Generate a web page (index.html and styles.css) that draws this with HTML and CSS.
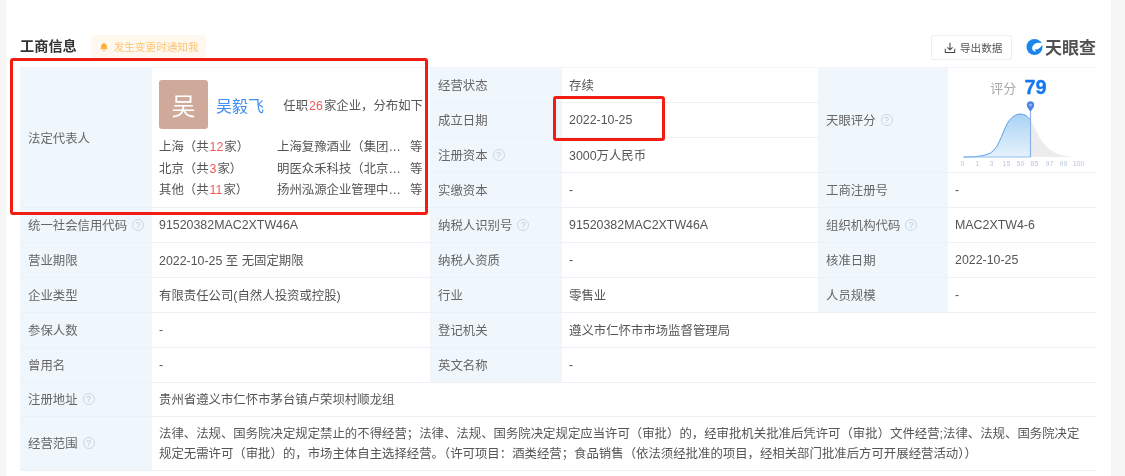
FILE: index.html
```html
<!DOCTYPE html>
<html lang="zh-CN">
<head>
<meta charset="utf-8">
<title>工商信息</title>
<link rel="stylesheet" href="styles.css">
</head>
<body>
<main class="card">
  <header class="head">
    <h2 class="title">工商信息</h2>
    <div class="notify">
      <svg class="bell" viewBox="0 0 12 12" width="10" height="10"><path d="M6 .8c.6 0 1 .4 1 .9 1.700.5 2.500 1.800 2.500 3.500v2.300l1 1.300H1.500l1-1.300V5.200C2.500 3.500 3.300 2.200 5 1.700c0-.5.400-.9 1-.9zM4.700 9.800h2.600C7.200 10.700 6.700 11.200 6 11.200s-1.200-.5-1.300-1.400z" fill="#ffb13d"/></svg>
      发生变更时通知我
    </div>
    <div class="spacer"></div>
    <button class="export">
      <svg viewBox="0 0 14 14" width="12" height="12" fill="none" stroke="#444" stroke-width="1.200"><path d="M7 1v8M4 6.200 7 9.200l3-3M1.500 8v4.200h11V8"/></svg>
      导出数据
    </button>
    <div class="logo">
      <svg viewBox="0 0 18 18" width="18" height="18"><circle cx="9" cy="9" r="8.500" fill="#1a86ec"/><path d="M18 5.500C13 3 7.500 5 6.500 9.500c-.4 2.500 1.500 4.500 4 4.200L9 11.500c2.500.5 5-.5 6.500-2.500.8-1 1.500-2 2.500-3.500z" fill="#fff"/></svg>
      <span>天眼查</span>
    </div>
  </header>

  <section class="grid">
    <div class="k span4">法定代表人</div>
    <div class="v person span4">
      <div class="person-top">
        <div class="avatar">吴</div>
        <a class="name">吴毅飞</a>
        <div class="summary">任职<em>26</em>家企业，分布如下</div>
      </div>
      <div class="dist"><span class="city">上海（共<em>12</em>家）</span><span class="co">上海复豫酒业（集团…</span><span>等</span></div>
      <div class="dist"><span class="city">北京（共<em>3</em>家）</span><span class="co">明医众禾科技（北京…</span><span>等</span></div>
      <div class="dist"><span class="city">其他（共<em>11</em>家）</span><span class="co">扬州泓源企业管理中…</span><span>等</span></div>
    </div>
    <div class="k">经营状态</div>
    <div class="v">存续</div>
    <div class="k span3">天眼评分<i class="q">?</i></div>
    <div class="v score span3">
      <div class="score-head"><span class="score-label">评分</span><b class="score-num">79</b></div>
      <svg class="chart" viewBox="0 0 136 70" width="136" height="70">
        <defs>
          <linearGradient id="fillBlue" x1="0" y1="0" x2="0" y2="1"><stop offset="0" stop-color="#a9d2f5"/><stop offset="1" stop-color="#e6f2fc"/></linearGradient>
        </defs>
        <path d="M76.500 19C81 26 84 36 89.500 42 95 49 102 53 109.500 54.500 115 55.500 120 56 124.500 56H76.500z" fill="#ececef"/>
        <path d="M9.500 56C22 56 30 55 36.500 52 46 47 50 24 56.500 18 60 14.500 63 13 66.500 13 71 13 74 16 76.500 19V56z" fill="url(#fillBlue)"/>
        <path d="M9.500 56C22 56 30 55 36.500 52 46 47 50 24 56.500 18 60 14.500 63 13 66.500 13 71 13 74 16 76.500 19" fill="none" stroke="#5a9fe8" stroke-width="1"/>
        <path d="M9.500 56h67" stroke="#8cc0f0" stroke-width="1"/>
        <path d="M76.500 8v48" stroke="#8ab2ea" stroke-width="1.200"/>
        <path d="M76.500 10.500c-2.500-3-3.700-4.800-3.700-6.500a3.700 3.700 0 0 1 7.400 0c0 1.700-1.200 3.500-3.700 6.500z" fill="#4d86e0"/>
        <circle cx="76.500" cy="4" r="1.300" fill="#9cc0f2"/>
        <g class="ticks"><text x="8.500" y="65">0</text><text x="23.500" y="65">1</text><text x="37.500" y="65">3</text><text x="52.500" y="65">15</text><text x="66.500" y="65">50</text><text x="80.500" y="65">85</text><text x="95.500" y="65">97</text><text x="109.500" y="65">99</text><text x="124.500" y="65">100</text></g>
      </svg>
    </div>
    <div class="k">成立日期</div>
    <div class="v">2022-10-25</div>
    <div class="k">注册资本<i class="q">?</i></div>
    <div class="v">3000万人民币</div>
    <div class="k">实缴资本</div>
    <div class="v">-</div>
    <div class="k">工商注册号</div>
    <div class="v">-</div>

    <div class="k">统一社会信用代码<i class="q">?</i></div>
    <div class="v">91520382MAC2XTW46A</div>
    <div class="k">纳税人识别号<i class="q">?</i></div>
    <div class="v">91520382MAC2XTW46A</div>
    <div class="k">组织机构代码<i class="q">?</i></div>
    <div class="v">MAC2XTW4-6</div>

    <div class="k">营业期限</div>
    <div class="v">2022-10-25 至 无固定期限</div>
    <div class="k">纳税人资质</div>
    <div class="v">-</div>
    <div class="k">核准日期</div>
    <div class="v">2022-10-25</div>

    <div class="k">企业类型</div>
    <div class="v">有限责任公司(自然人投资或控股)</div>
    <div class="k">行业</div>
    <div class="v">零售业</div>
    <div class="k">人员规模</div>
    <div class="v">-</div>

    <div class="k">参保人数</div>
    <div class="v">-</div>
    <div class="k">登记机关</div>
    <div class="v wide3">遵义市仁怀市市场监督管理局</div>

    <div class="k">曾用名</div>
    <div class="v">-</div>
    <div class="k">英文名称</div>
    <div class="v wide3">-</div>

    <div class="k">注册地址<i class="q">?</i></div>
    <div class="v wide5">贵州省遵义市仁怀市茅台镇卢荣坝村顺龙组</div>

    <div class="k">经营范围<i class="q">?</i></div>
    <div class="v wide5 scope">法律、法规、国务院决定规定禁止的不得经营；法律、法规、国务院决定规定应当许可（审批）的，经审批机关批准后凭许可（审批）文件经营;法律、法规、国务院决定规定无需许可（审批）的，市场主体自主选择经营。（许可项目：酒类经营；食品销售（依法须经批准的项目，经相关部门批准后方可开展经营活动））</div>
  </section>

  <div class="mark mark-person"></div>
  <div class="mark mark-date"></div>
</main>
</body>
</html>
```
FILE: styles.css
```css
* { box-sizing: border-box; }
html, body { margin: 0; height: 100%; }
body {
  background: #f6f6f7;
  font-family: "Liberation Sans", "Noto Sans CJK SC", sans-serif;
  font-size: 12.4px;
  color: #555;
  overflow: hidden;
}
.card {
  position: relative;
  width: 1105px;
  height: 476px;
  margin-left: 6px;
  padding: 0 15px 0 14px;
  background: #fff;
  filter: blur(.35px);
}
.head { display: flex; align-items: center; height: 67px; padding-top: 24px; }
.title { margin: 0; font-size: 14.2px; font-weight: 700; color: #333; line-height: 20px; }
.notify {
  display: flex; align-items: center; gap: 5px;
  height: 23px; margin: 2px 0 0 14px; padding: 0 7px 0 8px;
  background: #fff8ee; border-radius: 4px;
  color: #ffc573; font-size: 10.6px;
}
.spacer { flex: 1; }
.export {
  display: flex; align-items: center; gap: 4px;
  width: 81px; height: 25px; margin-top: 4px; padding: 0 0 0 12px;
  background: #fff; border: 1px solid #eee; border-radius: 2px;
  color: #555; font: 10.6px "Liberation Sans", "Noto Sans CJK SC", sans-serif;
}
.logo { display: flex; align-items: center; gap: 2px; margin: 2px 0 0 14px; width: 70px; color: #525252; }
.logo span { font-size: 17px; font-weight: 700; letter-spacing: 0; white-space: nowrap; }

.grid {
  display: grid;
  grid-template-columns: 132px 278px 132px 256px 130px 148px;
  grid-template-rows: repeat(9, 35px) 33.5px 54px;
  border-top: 1px solid #f2f4f7;
  border-right: 1px solid #f2f4f7;
}
.k, .v { display: flex; align-items: center; padding: 0 7px; border-bottom: 1px solid #edf1f5; white-space: nowrap; }
.k { padding-left: 8px; background: #eff6fc; color: #666; }
.v { color: #555; background: #fff; }
.span3 { grid-row: span 3; }
.span4 { grid-row: span 4; }
.wide3 { grid-column: span 3; }
.wide5 { grid-column: span 5; }
.scope { display: block; white-space: normal; line-height: 20.5px; padding-top: 7px; }
.q {
  display: inline-flex; align-items: center; justify-content: center;
  width: 12px; height: 12px; margin-left: 5px;
  border: 1px solid #cbd8e2; border-radius: 50%;
  color: #bccad6; font-size: 9px; font-style: normal; line-height: 1;
}
em { margin: 0 1px; color: #f0565a; font-style: normal; }

.person { display: block; padding: 12px 7px 0; }
.person-top { display: flex; align-items: center; margin-bottom: 8px; }
.avatar {
  display: flex; align-items: center; justify-content: center;
  width: 49px; height: 49px;
  background: #cfa99a; border-radius: 3px;
  color: #fff; font-size: 24px;
}
.name { margin-left: 8px; color: #3f8ef0; font-size: 16px; }
.summary { margin-left: auto; }
.dist { display: flex; height: 21.5px; line-height: 21.5px; }
.city { flex: 0 0 118px; }
.co { flex: 0 0 133px; white-space: nowrap; }

.score { display: flex; flex-direction: column; align-items: center; padding: 8px 0 0; }
.score-head { display: flex; align-items: center; gap: 8px; height: 22px; margin-left: -7px; }
.score-label { color: #aaa; font-size: 13px; }
.score-num { color: #1677ef; font-size: 20px; -webkit-text-stroke: .3px #1677ef; }
.chart { display: block; margin-top: 3px; }
.ticks { font-size: 7px; fill: #bcc6da; text-anchor: middle; }

.mark { position: absolute; border: 3px solid #f01d14; border-radius: 3px; pointer-events: none; }
.mark-person { left: 4px; top: 58px; width: 418px; height: 157px; }
.mark-date { left: 547px; top: 96px; width: 112px; height: 45px; }
```
